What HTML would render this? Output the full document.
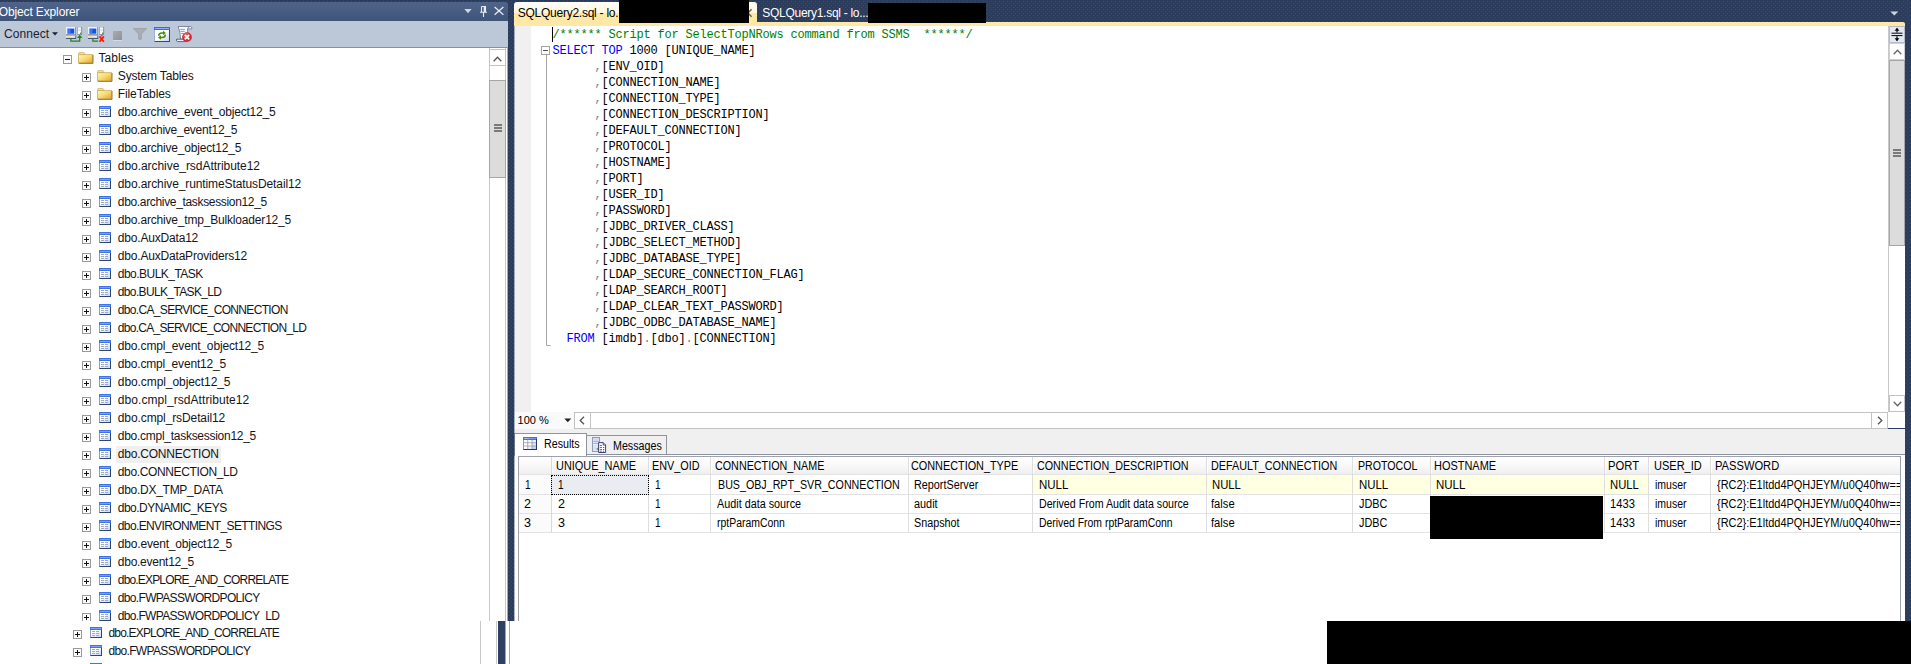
<!DOCTYPE html>
<html><head><meta charset="utf-8"><title>SSMS</title>
<style>
html,body{margin:0;padding:0}
body{width:1911px;height:664px;overflow:hidden;position:relative;background-color:#2b3c5c;
background-image:radial-gradient(circle at 3.5px 1.5px,#374c70 0.6px,transparent 1px),radial-gradient(circle at 1.5px 3.5px,#374c70 0.6px,transparent 1px);background-size:4px 4px;}
.a{position:absolute}
.t{position:absolute;white-space:pre;line-height:16px;transform-origin:0 50%;display:block}
svg{position:absolute;overflow:visible}
</style></head><body>
<svg width="0" height="0" style="left:0;top:0"><defs>
<linearGradient id="fg" x1="0" y1="0" x2="1" y2="1"><stop offset="0" stop-color="#fff7c6"/><stop offset=".5" stop-color="#f8d972"/><stop offset="1" stop-color="#dfa22e"/></linearGradient>
<linearGradient id="tg" x1="0" y1="0" x2="1" y2="1"><stop offset="0.3" stop-color="#ffffff"/><stop offset="1" stop-color="#c4d8f6"/></linearGradient>
</defs></svg>

<!-- Object Explorer -->
<div class="a" style="left:0px;top:2px;width:508px;height:19px;background:linear-gradient(#4f6488,#3f5479);border-top-right-radius:3px"></div>
<span id="t1" class="t " style="left:-1.30px;top:4.04px;font-size:12px;color:#fff;font-family:'Liberation Sans',sans-serif;letter-spacing:-0.129px;">Object Explorer</span>
<svg style="left:464px;top:5px" width="42" height="13" viewBox="0 0 42 13"><path d="M0.3 4 H7.7 L4 8.2 Z" fill="#cfd6e2"/><path d="M17.5 1.5 H21.5 V7 M17.5 1.5 V7 M16 7.2 H23 M19.5 7.2 V12" stroke="#e6eaf1" stroke-width="1.1" fill="none"/><path d="M20.5 1.5V7" stroke="#e6eaf1" stroke-width="1.6"/><path d="M30.6 2 L39.4 9.8 M39.4 2 L30.6 9.8" stroke="#e6eaf1" stroke-width="1.3" fill="none"/></svg>
<div class="a" style="left:0px;top:21px;width:508px;height:26px;background:#bcc7d8;"></div>
<div class="a" style="left:0px;top:47px;width:508px;height:1px;background:#8591a5;"></div>
<span id="t2" class="t " style="left:4.00px;top:26.04px;font-size:12px;color:#1b2230;font-family:'Liberation Sans',sans-serif;letter-spacing:0.083px;">Connect</span>
<svg style="left:52px;top:31.6px" width="7" height="5"><path d="M0 0.3H6L3 3.5Z" fill="#1b2230"/></svg>
<svg style="left:66px;top:26px" width="18" height="17" viewBox="0 0 18 17"><rect x="0" y="1" width="10" height="8" fill="#7a879f"/><rect x="0" y="1" width="9.2" height="7.2" fill="#eef2fa"/><rect x="1.5" y="2.6" width="6.8" height="5.1" fill="#1250ee"/><rect x="1.5" y="2.6" width="3" height="5.1" fill="#4a86ff" opacity=".75"/><rect x="0" y="9.6" width="10.2" height="3.3" fill="#3b4a69"/><rect x="0" y="9.6" width="9.4" height="2.3" fill="#e3e8f2"/><rect x="1" y="10.2" width="2.6" height="1.2" fill="#f1e36a"/><rect x="11.3" y="0.9" width="4.8" height="8" rx="1.2" fill="#6b768c"/><rect x="11.7" y="1.3" width="3.6" height="7" rx="0.8" fill="#fafbfd"/><rect x="12.2" y="3.6" width="2.6" height="0.8" fill="#b3bccd"/><rect x="14" y="6.6" width="1.3" height="1.3" fill="#35a11f"/></svg>
<svg style="left:66px;top:26px" width="18" height="17" viewBox="0 0 18 17"><path d="M4.9 12.9 V15.1 H13.7 V11" stroke="#1f8a00" stroke-width="1.25" fill="none"/><path d="M11 12 L13.7 8.8 L16.4 12 Z" fill="#1f8a00"/></svg>
<svg style="left:88px;top:26px" width="18" height="17" viewBox="0 0 18 17"><rect x="0" y="1" width="10" height="8" fill="#7a879f"/><rect x="0" y="1" width="9.2" height="7.2" fill="#eef2fa"/><rect x="1.5" y="2.6" width="6.8" height="5.1" fill="#1250ee"/><rect x="1.5" y="2.6" width="3" height="5.1" fill="#4a86ff" opacity=".75"/><rect x="0" y="9.6" width="10.2" height="3.3" fill="#3b4a69"/><rect x="0" y="9.6" width="9.4" height="2.3" fill="#e3e8f2"/><rect x="1" y="10.2" width="2.6" height="1.2" fill="#f1e36a"/><rect x="11.3" y="0.9" width="4.8" height="8" rx="1.2" fill="#6b768c"/><rect x="11.7" y="1.3" width="3.6" height="7" rx="0.8" fill="#fafbfd"/><rect x="12.2" y="3.6" width="2.6" height="0.8" fill="#b3bccd"/><rect x="14" y="6.6" width="1.3" height="1.3" fill="#35a11f"/></svg>
<svg style="left:88px;top:26px" width="18" height="17" viewBox="0 0 18 17"><path d="M4.9 12.9 V15.1 H10" stroke="#1f8a00" stroke-width="1.25" fill="none"/><path d="M13.7 8.9V10.2" stroke="#1f8a00" stroke-width="1.2"/><path d="M11.5 10.4 L15.9 15.7 M15.9 10.4 L11.5 15.7" stroke="#ff1a00" stroke-width="1.8" fill="none"/></svg>
<div class="a" style="left:113px;top:31px;width:9px;height:9px;background:linear-gradient(135deg,#a9adb3,#8e9297);box-shadow:0 1px 0 #d5dbe6"></div>
<svg style="left:133px;top:28px" width="14" height="12" viewBox="0 0 14 12"><path d="M0.3 0.5 H13.7 L8.3 6 V11.3 H5.7 V6 Z" fill="#a9aeb6" stroke="#8f959e" stroke-width="0.6"/></svg>
<svg style="left:154px;top:27px" width="16" height="15" viewBox="0 0 16 15"><defs><linearGradient id="rw" x1="0" y1="0" x2="1" y2="1"><stop offset=".45" stop-color="#fff"/><stop offset="1" stop-color="#c6d6f4"/></linearGradient></defs><rect x="0" y="0" width="16" height="15" fill="#9fb3da"/><rect x="1" y="3" width="14" height="11" fill="url(#rw)"/><rect x="0" y="0" width="16" height="3" fill="#386ce0"/><rect x="1" y="1" width="14" height="1" fill="#8db0f5"/><rect x="15" y="3" width="1" height="12" fill="#2f4a7a"/><rect x="0.6" y="14" width="15.4" height="1" fill="#2f4a7a"/><path d="M4.7 8.8 Q4.7 5.9 8 5.9 H9.4" stroke="#4a8c00" stroke-width="1.5" fill="none"/><path d="M9 3.7 L11.9 5.9 L9 8.1Z" fill="#4a8c00"/><path d="M11.3 7.4 Q11.3 10.5 8 10.5 H6.6" stroke="#4a8c00" stroke-width="1.5" fill="none"/><path d="M7 8.3 L4.1 10.5 L7 12.7Z" fill="#4a8c00"/></svg>
<svg style="left:176px;top:26px" width="17" height="16" viewBox="0 0 17 16"><path d="M2.2 0.5 H14.6 Q16.2 0.7 15.8 2.9 H11.6 V13.2 H4.6 Q4.4 6 2.2 0.5 Z" fill="#f8fafd" stroke="#66748f" stroke-width="0.8"/><path d="M11.6 2.9 Q11.8 1 13.6 1" stroke="#66748f" stroke-width="0.7" fill="none"/><path d="M0.5 13.2 H11.6 Q11.6 15.6 9.6 15.6 H1.6 Q0.1 15.3 0.5 13.2Z" fill="#e9eef8" stroke="#3d4a66" stroke-width="0.8"/><path d="M4.2 3.4H8.8M4.4 5.4H8.8M5.2 7.5H8.8" stroke="#7096e4" stroke-width="0.9"/><circle cx="11" cy="11.1" r="4.9" fill="#d42a30"/><circle cx="10.2" cy="9.8" r="3" fill="#ee7a7c" opacity=".5"/><path d="M8.8 8.9 L13.2 13.3 M13.2 8.9 L8.8 13.3" stroke="#fff" stroke-width="1.7"/></svg>
<div class="a" style="left:0px;top:48px;width:508px;height:573px;background:#fff;"></div>
<div class="a" style="left:0;top:48px;width:508px;height:573px;overflow:hidden"><div class="a" style="left:0;top:-48px">
<svg style="left:63px;top:55px" width="9" height="9" viewBox="0 0 9 9"><rect x="0.5" y="0.5" width="8" height="8" fill="#fbfbfb" stroke="#9a9a9a" stroke-width="1"/><path d="M2 4.5 H7" stroke="#111" stroke-width="1"/></svg><svg style="left:78px;top:52px" width="16" height="13" viewBox="0 0 16 13"><path d="M0.6 1.3 Q0.6 0.5 1.4 0.5 H5.6 Q6.3 0.5 6.6 1.2 L7 2.6 H0.6Z" fill="#f7e08d" stroke="#c9a548" stroke-width="0.6"/><path d="M0.5 2.6 H14.6 V11 H0.5 Z" fill="url(#fg)" stroke="#c9a242" stroke-width="0.7"/><path d="M15 3 V11.4 H0.8" stroke="#8f6f28" stroke-width="0.9" fill="none"/></svg><span id="t3" class="t " style="left:98.50px;top:50.14px;font-size:12px;color:#15151a;font-family:'Liberation Sans',sans-serif;letter-spacing:0.083px;">Tables</span>
<svg style="left:82px;top:73px" width="9" height="9" viewBox="0 0 9 9"><rect x="0.5" y="0.5" width="8" height="8" fill="#fbfbfb" stroke="#9a9a9a" stroke-width="1"/><path d="M2 4.5 H7" stroke="#111" stroke-width="1"/><path d="M4.5 2 V7" stroke="#111" stroke-width="1"/></svg><svg style="left:97px;top:70px" width="16" height="13" viewBox="0 0 16 13"><path d="M0.6 1.3 Q0.6 0.5 1.4 0.5 H5.6 Q6.3 0.5 6.6 1.2 L7 2.6 H0.6Z" fill="#f7e08d" stroke="#c9a548" stroke-width="0.6"/><path d="M0.5 2.6 H14.6 V11 H0.5 Z" fill="url(#fg)" stroke="#c9a242" stroke-width="0.7"/><path d="M15 3 V11.4 H0.8" stroke="#8f6f28" stroke-width="0.9" fill="none"/></svg><span id="t4" class="t " style="left:117.80px;top:68.14px;font-size:12px;color:#15151a;font-family:'Liberation Sans',sans-serif;letter-spacing:-0.151px;">System Tables</span>
<svg style="left:82px;top:91px" width="9" height="9" viewBox="0 0 9 9"><rect x="0.5" y="0.5" width="8" height="8" fill="#fbfbfb" stroke="#9a9a9a" stroke-width="1"/><path d="M2 4.5 H7" stroke="#111" stroke-width="1"/><path d="M4.5 2 V7" stroke="#111" stroke-width="1"/></svg><svg style="left:97px;top:88px" width="16" height="13" viewBox="0 0 16 13"><path d="M0.6 1.3 Q0.6 0.5 1.4 0.5 H5.6 Q6.3 0.5 6.6 1.2 L7 2.6 H0.6Z" fill="#f7e08d" stroke="#c9a548" stroke-width="0.6"/><path d="M0.5 2.6 H14.6 V11 H0.5 Z" fill="url(#fg)" stroke="#c9a242" stroke-width="0.7"/><path d="M15 3 V11.4 H0.8" stroke="#8f6f28" stroke-width="0.9" fill="none"/></svg><span id="t5" class="t " style="left:117.80px;top:86.14px;font-size:12px;color:#15151a;font-family:'Liberation Sans',sans-serif;letter-spacing:-0.115px;">FileTables</span>
<svg style="left:82px;top:109px" width="9" height="9" viewBox="0 0 9 9"><rect x="0.5" y="0.5" width="8" height="8" fill="#fbfbfb" stroke="#9a9a9a" stroke-width="1"/><path d="M2 4.5 H7" stroke="#111" stroke-width="1"/><path d="M4.5 2 V7" stroke="#111" stroke-width="1"/></svg><svg style="left:99px;top:106px" width="12" height="11" viewBox="0 0 12 11"><rect x="0" y="0" width="12" height="11" fill="#8c9dc2"/><rect x="1" y="3" width="10" height="7" fill="url(#tg)"/><rect x="11" y="3" width="1" height="8" fill="#2f4673"/><rect x="0.6" y="10" width="11.4" height="1" fill="#2f4673"/><rect x="0" y="0" width="12" height="3" fill="#3f74e4"/><rect x="1" y="1" width="10" height="1" fill="#7aa2f0"/><path d="M2 4.5H5M6 4.5H9M2 6.5H5M6 6.5H9M2 8.5H5M6 8.5H9" stroke="#9dabc9" stroke-width="1"/></svg><span id="t6" class="t " style="left:117.80px;top:104.14px;font-size:12px;color:#15151a;font-family:'Liberation Sans',sans-serif;letter-spacing:-0.206px;">dbo.archive_event_object12_5</span>
<svg style="left:82px;top:127px" width="9" height="9" viewBox="0 0 9 9"><rect x="0.5" y="0.5" width="8" height="8" fill="#fbfbfb" stroke="#9a9a9a" stroke-width="1"/><path d="M2 4.5 H7" stroke="#111" stroke-width="1"/><path d="M4.5 2 V7" stroke="#111" stroke-width="1"/></svg><svg style="left:99px;top:124px" width="12" height="11" viewBox="0 0 12 11"><rect x="0" y="0" width="12" height="11" fill="#8c9dc2"/><rect x="1" y="3" width="10" height="7" fill="url(#tg)"/><rect x="11" y="3" width="1" height="8" fill="#2f4673"/><rect x="0.6" y="10" width="11.4" height="1" fill="#2f4673"/><rect x="0" y="0" width="12" height="3" fill="#3f74e4"/><rect x="1" y="1" width="10" height="1" fill="#7aa2f0"/><path d="M2 4.5H5M6 4.5H9M2 6.5H5M6 6.5H9M2 8.5H5M6 8.5H9" stroke="#9dabc9" stroke-width="1"/></svg><span id="t7" class="t " style="left:117.80px;top:122.14px;font-size:12px;color:#15151a;font-family:'Liberation Sans',sans-serif;letter-spacing:-0.258px;">dbo.archive_event12_5</span>
<svg style="left:82px;top:145px" width="9" height="9" viewBox="0 0 9 9"><rect x="0.5" y="0.5" width="8" height="8" fill="#fbfbfb" stroke="#9a9a9a" stroke-width="1"/><path d="M2 4.5 H7" stroke="#111" stroke-width="1"/><path d="M4.5 2 V7" stroke="#111" stroke-width="1"/></svg><svg style="left:99px;top:142px" width="12" height="11" viewBox="0 0 12 11"><rect x="0" y="0" width="12" height="11" fill="#8c9dc2"/><rect x="1" y="3" width="10" height="7" fill="url(#tg)"/><rect x="11" y="3" width="1" height="8" fill="#2f4673"/><rect x="0.6" y="10" width="11.4" height="1" fill="#2f4673"/><rect x="0" y="0" width="12" height="3" fill="#3f74e4"/><rect x="1" y="1" width="10" height="1" fill="#7aa2f0"/><path d="M2 4.5H5M6 4.5H9M2 6.5H5M6 6.5H9M2 8.5H5M6 8.5H9" stroke="#9dabc9" stroke-width="1"/></svg><span id="t8" class="t " style="left:117.80px;top:140.14px;font-size:12px;color:#15151a;font-family:'Liberation Sans',sans-serif;letter-spacing:-0.187px;">dbo.archive_object12_5</span>
<svg style="left:82px;top:163px" width="9" height="9" viewBox="0 0 9 9"><rect x="0.5" y="0.5" width="8" height="8" fill="#fbfbfb" stroke="#9a9a9a" stroke-width="1"/><path d="M2 4.5 H7" stroke="#111" stroke-width="1"/><path d="M4.5 2 V7" stroke="#111" stroke-width="1"/></svg><svg style="left:99px;top:160px" width="12" height="11" viewBox="0 0 12 11"><rect x="0" y="0" width="12" height="11" fill="#8c9dc2"/><rect x="1" y="3" width="10" height="7" fill="url(#tg)"/><rect x="11" y="3" width="1" height="8" fill="#2f4673"/><rect x="0.6" y="10" width="11.4" height="1" fill="#2f4673"/><rect x="0" y="0" width="12" height="3" fill="#3f74e4"/><rect x="1" y="1" width="10" height="1" fill="#7aa2f0"/><path d="M2 4.5H5M6 4.5H9M2 6.5H5M6 6.5H9M2 8.5H5M6 8.5H9" stroke="#9dabc9" stroke-width="1"/></svg><span id="t9" class="t " style="left:117.80px;top:158.14px;font-size:12px;color:#15151a;font-family:'Liberation Sans',sans-serif;letter-spacing:-0.049px;">dbo.archive_rsdAttribute12</span>
<svg style="left:82px;top:181px" width="9" height="9" viewBox="0 0 9 9"><rect x="0.5" y="0.5" width="8" height="8" fill="#fbfbfb" stroke="#9a9a9a" stroke-width="1"/><path d="M2 4.5 H7" stroke="#111" stroke-width="1"/><path d="M4.5 2 V7" stroke="#111" stroke-width="1"/></svg><svg style="left:99px;top:178px" width="12" height="11" viewBox="0 0 12 11"><rect x="0" y="0" width="12" height="11" fill="#8c9dc2"/><rect x="1" y="3" width="10" height="7" fill="url(#tg)"/><rect x="11" y="3" width="1" height="8" fill="#2f4673"/><rect x="0.6" y="10" width="11.4" height="1" fill="#2f4673"/><rect x="0" y="0" width="12" height="3" fill="#3f74e4"/><rect x="1" y="1" width="10" height="1" fill="#7aa2f0"/><path d="M2 4.5H5M6 4.5H9M2 6.5H5M6 6.5H9M2 8.5H5M6 8.5H9" stroke="#9dabc9" stroke-width="1"/></svg><span id="t10" class="t " style="left:117.80px;top:176.14px;font-size:12px;color:#15151a;font-family:'Liberation Sans',sans-serif;letter-spacing:-0.103px;">dbo.archive_runtimeStatusDetail12</span>
<svg style="left:82px;top:199px" width="9" height="9" viewBox="0 0 9 9"><rect x="0.5" y="0.5" width="8" height="8" fill="#fbfbfb" stroke="#9a9a9a" stroke-width="1"/><path d="M2 4.5 H7" stroke="#111" stroke-width="1"/><path d="M4.5 2 V7" stroke="#111" stroke-width="1"/></svg><svg style="left:99px;top:196px" width="12" height="11" viewBox="0 0 12 11"><rect x="0" y="0" width="12" height="11" fill="#8c9dc2"/><rect x="1" y="3" width="10" height="7" fill="url(#tg)"/><rect x="11" y="3" width="1" height="8" fill="#2f4673"/><rect x="0.6" y="10" width="11.4" height="1" fill="#2f4673"/><rect x="0" y="0" width="12" height="3" fill="#3f74e4"/><rect x="1" y="1" width="10" height="1" fill="#7aa2f0"/><path d="M2 4.5H5M6 4.5H9M2 6.5H5M6 6.5H9M2 8.5H5M6 8.5H9" stroke="#9dabc9" stroke-width="1"/></svg><span id="t11" class="t " style="left:117.80px;top:194.14px;font-size:12px;color:#15151a;font-family:'Liberation Sans',sans-serif;letter-spacing:-0.335px;">dbo.archive_tasksession12_5</span>
<svg style="left:82px;top:217px" width="9" height="9" viewBox="0 0 9 9"><rect x="0.5" y="0.5" width="8" height="8" fill="#fbfbfb" stroke="#9a9a9a" stroke-width="1"/><path d="M2 4.5 H7" stroke="#111" stroke-width="1"/><path d="M4.5 2 V7" stroke="#111" stroke-width="1"/></svg><svg style="left:99px;top:214px" width="12" height="11" viewBox="0 0 12 11"><rect x="0" y="0" width="12" height="11" fill="#8c9dc2"/><rect x="1" y="3" width="10" height="7" fill="url(#tg)"/><rect x="11" y="3" width="1" height="8" fill="#2f4673"/><rect x="0.6" y="10" width="11.4" height="1" fill="#2f4673"/><rect x="0" y="0" width="12" height="3" fill="#3f74e4"/><rect x="1" y="1" width="10" height="1" fill="#7aa2f0"/><path d="M2 4.5H5M6 4.5H9M2 6.5H5M6 6.5H9M2 8.5H5M6 8.5H9" stroke="#9dabc9" stroke-width="1"/></svg><span id="t12" class="t " style="left:117.80px;top:212.14px;font-size:12px;color:#15151a;font-family:'Liberation Sans',sans-serif;letter-spacing:-0.183px;">dbo.archive_tmp_Bulkloader12_5</span>
<svg style="left:82px;top:235px" width="9" height="9" viewBox="0 0 9 9"><rect x="0.5" y="0.5" width="8" height="8" fill="#fbfbfb" stroke="#9a9a9a" stroke-width="1"/><path d="M2 4.5 H7" stroke="#111" stroke-width="1"/><path d="M4.5 2 V7" stroke="#111" stroke-width="1"/></svg><svg style="left:99px;top:232px" width="12" height="11" viewBox="0 0 12 11"><rect x="0" y="0" width="12" height="11" fill="#8c9dc2"/><rect x="1" y="3" width="10" height="7" fill="url(#tg)"/><rect x="11" y="3" width="1" height="8" fill="#2f4673"/><rect x="0.6" y="10" width="11.4" height="1" fill="#2f4673"/><rect x="0" y="0" width="12" height="3" fill="#3f74e4"/><rect x="1" y="1" width="10" height="1" fill="#7aa2f0"/><path d="M2 4.5H5M6 4.5H9M2 6.5H5M6 6.5H9M2 8.5H5M6 8.5H9" stroke="#9dabc9" stroke-width="1"/></svg><span id="t13" class="t " style="left:117.80px;top:230.14px;font-size:12px;color:#15151a;font-family:'Liberation Sans',sans-serif;letter-spacing:-0.186px;">dbo.AuxData12</span>
<svg style="left:82px;top:253px" width="9" height="9" viewBox="0 0 9 9"><rect x="0.5" y="0.5" width="8" height="8" fill="#fbfbfb" stroke="#9a9a9a" stroke-width="1"/><path d="M2 4.5 H7" stroke="#111" stroke-width="1"/><path d="M4.5 2 V7" stroke="#111" stroke-width="1"/></svg><svg style="left:99px;top:250px" width="12" height="11" viewBox="0 0 12 11"><rect x="0" y="0" width="12" height="11" fill="#8c9dc2"/><rect x="1" y="3" width="10" height="7" fill="url(#tg)"/><rect x="11" y="3" width="1" height="8" fill="#2f4673"/><rect x="0.6" y="10" width="11.4" height="1" fill="#2f4673"/><rect x="0" y="0" width="12" height="3" fill="#3f74e4"/><rect x="1" y="1" width="10" height="1" fill="#7aa2f0"/><path d="M2 4.5H5M6 4.5H9M2 6.5H5M6 6.5H9M2 8.5H5M6 8.5H9" stroke="#9dabc9" stroke-width="1"/></svg><span id="t14" class="t " style="left:117.80px;top:248.14px;font-size:12px;color:#15151a;font-family:'Liberation Sans',sans-serif;letter-spacing:-0.187px;">dbo.AuxDataProviders12</span>
<svg style="left:82px;top:271px" width="9" height="9" viewBox="0 0 9 9"><rect x="0.5" y="0.5" width="8" height="8" fill="#fbfbfb" stroke="#9a9a9a" stroke-width="1"/><path d="M2 4.5 H7" stroke="#111" stroke-width="1"/><path d="M4.5 2 V7" stroke="#111" stroke-width="1"/></svg><svg style="left:99px;top:268px" width="12" height="11" viewBox="0 0 12 11"><rect x="0" y="0" width="12" height="11" fill="#8c9dc2"/><rect x="1" y="3" width="10" height="7" fill="url(#tg)"/><rect x="11" y="3" width="1" height="8" fill="#2f4673"/><rect x="0.6" y="10" width="11.4" height="1" fill="#2f4673"/><rect x="0" y="0" width="12" height="3" fill="#3f74e4"/><rect x="1" y="1" width="10" height="1" fill="#7aa2f0"/><path d="M2 4.5H5M6 4.5H9M2 6.5H5M6 6.5H9M2 8.5H5M6 8.5H9" stroke="#9dabc9" stroke-width="1"/></svg><span id="t15" class="t " style="left:117.80px;top:266.14px;font-size:12px;color:#15151a;font-family:'Liberation Sans',sans-serif;letter-spacing:-0.527px;">dbo.BULK_TASK</span>
<svg style="left:82px;top:289px" width="9" height="9" viewBox="0 0 9 9"><rect x="0.5" y="0.5" width="8" height="8" fill="#fbfbfb" stroke="#9a9a9a" stroke-width="1"/><path d="M2 4.5 H7" stroke="#111" stroke-width="1"/><path d="M4.5 2 V7" stroke="#111" stroke-width="1"/></svg><svg style="left:99px;top:286px" width="12" height="11" viewBox="0 0 12 11"><rect x="0" y="0" width="12" height="11" fill="#8c9dc2"/><rect x="1" y="3" width="10" height="7" fill="url(#tg)"/><rect x="11" y="3" width="1" height="8" fill="#2f4673"/><rect x="0.6" y="10" width="11.4" height="1" fill="#2f4673"/><rect x="0" y="0" width="12" height="3" fill="#3f74e4"/><rect x="1" y="1" width="10" height="1" fill="#7aa2f0"/><path d="M2 4.5H5M6 4.5H9M2 6.5H5M6 6.5H9M2 8.5H5M6 8.5H9" stroke="#9dabc9" stroke-width="1"/></svg><span id="t16" class="t " style="left:117.80px;top:284.14px;font-size:12px;color:#15151a;font-family:'Liberation Sans',sans-serif;letter-spacing:-0.643px;">dbo.BULK_TASK_LD</span>
<svg style="left:82px;top:307px" width="9" height="9" viewBox="0 0 9 9"><rect x="0.5" y="0.5" width="8" height="8" fill="#fbfbfb" stroke="#9a9a9a" stroke-width="1"/><path d="M2 4.5 H7" stroke="#111" stroke-width="1"/><path d="M4.5 2 V7" stroke="#111" stroke-width="1"/></svg><svg style="left:99px;top:304px" width="12" height="11" viewBox="0 0 12 11"><rect x="0" y="0" width="12" height="11" fill="#8c9dc2"/><rect x="1" y="3" width="10" height="7" fill="url(#tg)"/><rect x="11" y="3" width="1" height="8" fill="#2f4673"/><rect x="0.6" y="10" width="11.4" height="1" fill="#2f4673"/><rect x="0" y="0" width="12" height="3" fill="#3f74e4"/><rect x="1" y="1" width="10" height="1" fill="#7aa2f0"/><path d="M2 4.5H5M6 4.5H9M2 6.5H5M6 6.5H9M2 8.5H5M6 8.5H9" stroke="#9dabc9" stroke-width="1"/></svg><span id="t17" class="t " style="left:117.80px;top:302.14px;font-size:12px;color:#15151a;font-family:'Liberation Sans',sans-serif;letter-spacing:-0.667px;">dbo.CA_SERVICE_CONNECTION</span>
<svg style="left:82px;top:325px" width="9" height="9" viewBox="0 0 9 9"><rect x="0.5" y="0.5" width="8" height="8" fill="#fbfbfb" stroke="#9a9a9a" stroke-width="1"/><path d="M2 4.5 H7" stroke="#111" stroke-width="1"/><path d="M4.5 2 V7" stroke="#111" stroke-width="1"/></svg><svg style="left:99px;top:322px" width="12" height="11" viewBox="0 0 12 11"><rect x="0" y="0" width="12" height="11" fill="#8c9dc2"/><rect x="1" y="3" width="10" height="7" fill="url(#tg)"/><rect x="11" y="3" width="1" height="8" fill="#2f4673"/><rect x="0.6" y="10" width="11.4" height="1" fill="#2f4673"/><rect x="0" y="0" width="12" height="3" fill="#3f74e4"/><rect x="1" y="1" width="10" height="1" fill="#7aa2f0"/><path d="M2 4.5H5M6 4.5H9M2 6.5H5M6 6.5H9M2 8.5H5M6 8.5H9" stroke="#9dabc9" stroke-width="1"/></svg><span id="t18" class="t " style="left:117.80px;top:320.14px;font-size:12px;color:#15151a;font-family:'Liberation Sans',sans-serif;letter-spacing:-0.716px;">dbo.CA_SERVICE_CONNECTION_LD</span>
<svg style="left:82px;top:343px" width="9" height="9" viewBox="0 0 9 9"><rect x="0.5" y="0.5" width="8" height="8" fill="#fbfbfb" stroke="#9a9a9a" stroke-width="1"/><path d="M2 4.5 H7" stroke="#111" stroke-width="1"/><path d="M4.5 2 V7" stroke="#111" stroke-width="1"/></svg><svg style="left:99px;top:340px" width="12" height="11" viewBox="0 0 12 11"><rect x="0" y="0" width="12" height="11" fill="#8c9dc2"/><rect x="1" y="3" width="10" height="7" fill="url(#tg)"/><rect x="11" y="3" width="1" height="8" fill="#2f4673"/><rect x="0.6" y="10" width="11.4" height="1" fill="#2f4673"/><rect x="0" y="0" width="12" height="3" fill="#3f74e4"/><rect x="1" y="1" width="10" height="1" fill="#7aa2f0"/><path d="M2 4.5H5M6 4.5H9M2 6.5H5M6 6.5H9M2 8.5H5M6 8.5H9" stroke="#9dabc9" stroke-width="1"/></svg><span id="t19" class="t " style="left:117.80px;top:338.14px;font-size:12px;color:#15151a;font-family:'Liberation Sans',sans-serif;letter-spacing:-0.155px;">dbo.cmpl_event_object12_5</span>
<svg style="left:82px;top:361px" width="9" height="9" viewBox="0 0 9 9"><rect x="0.5" y="0.5" width="8" height="8" fill="#fbfbfb" stroke="#9a9a9a" stroke-width="1"/><path d="M2 4.5 H7" stroke="#111" stroke-width="1"/><path d="M4.5 2 V7" stroke="#111" stroke-width="1"/></svg><svg style="left:99px;top:358px" width="12" height="11" viewBox="0 0 12 11"><rect x="0" y="0" width="12" height="11" fill="#8c9dc2"/><rect x="1" y="3" width="10" height="7" fill="url(#tg)"/><rect x="11" y="3" width="1" height="8" fill="#2f4673"/><rect x="0.6" y="10" width="11.4" height="1" fill="#2f4673"/><rect x="0" y="0" width="12" height="3" fill="#3f74e4"/><rect x="1" y="1" width="10" height="1" fill="#7aa2f0"/><path d="M2 4.5H5M6 4.5H9M2 6.5H5M6 6.5H9M2 8.5H5M6 8.5H9" stroke="#9dabc9" stroke-width="1"/></svg><span id="t20" class="t " style="left:117.80px;top:356.14px;font-size:12px;color:#15151a;font-family:'Liberation Sans',sans-serif;letter-spacing:-0.172px;">dbo.cmpl_event12_5</span>
<svg style="left:82px;top:379px" width="9" height="9" viewBox="0 0 9 9"><rect x="0.5" y="0.5" width="8" height="8" fill="#fbfbfb" stroke="#9a9a9a" stroke-width="1"/><path d="M2 4.5 H7" stroke="#111" stroke-width="1"/><path d="M4.5 2 V7" stroke="#111" stroke-width="1"/></svg><svg style="left:99px;top:376px" width="12" height="11" viewBox="0 0 12 11"><rect x="0" y="0" width="12" height="11" fill="#8c9dc2"/><rect x="1" y="3" width="10" height="7" fill="url(#tg)"/><rect x="11" y="3" width="1" height="8" fill="#2f4673"/><rect x="0.6" y="10" width="11.4" height="1" fill="#2f4673"/><rect x="0" y="0" width="12" height="3" fill="#3f74e4"/><rect x="1" y="1" width="10" height="1" fill="#7aa2f0"/><path d="M2 4.5H5M6 4.5H9M2 6.5H5M6 6.5H9M2 8.5H5M6 8.5H9" stroke="#9dabc9" stroke-width="1"/></svg><span id="t21" class="t " style="left:117.80px;top:374.14px;font-size:12px;color:#15151a;font-family:'Liberation Sans',sans-serif;letter-spacing:-0.077px;">dbo.cmpl_object12_5</span>
<svg style="left:82px;top:397px" width="9" height="9" viewBox="0 0 9 9"><rect x="0.5" y="0.5" width="8" height="8" fill="#fbfbfb" stroke="#9a9a9a" stroke-width="1"/><path d="M2 4.5 H7" stroke="#111" stroke-width="1"/><path d="M4.5 2 V7" stroke="#111" stroke-width="1"/></svg><svg style="left:99px;top:394px" width="12" height="11" viewBox="0 0 12 11"><rect x="0" y="0" width="12" height="11" fill="#8c9dc2"/><rect x="1" y="3" width="10" height="7" fill="url(#tg)"/><rect x="11" y="3" width="1" height="8" fill="#2f4673"/><rect x="0.6" y="10" width="11.4" height="1" fill="#2f4673"/><rect x="0" y="0" width="12" height="3" fill="#3f74e4"/><rect x="1" y="1" width="10" height="1" fill="#7aa2f0"/><path d="M2 4.5H5M6 4.5H9M2 6.5H5M6 6.5H9M2 8.5H5M6 8.5H9" stroke="#9dabc9" stroke-width="1"/></svg><span id="t22" class="t " style="left:117.80px;top:392.14px;font-size:12px;color:#15151a;font-family:'Liberation Sans',sans-serif;letter-spacing:0.060px;">dbo.cmpl_rsdAttribute12</span>
<svg style="left:82px;top:415px" width="9" height="9" viewBox="0 0 9 9"><rect x="0.5" y="0.5" width="8" height="8" fill="#fbfbfb" stroke="#9a9a9a" stroke-width="1"/><path d="M2 4.5 H7" stroke="#111" stroke-width="1"/><path d="M4.5 2 V7" stroke="#111" stroke-width="1"/></svg><svg style="left:99px;top:412px" width="12" height="11" viewBox="0 0 12 11"><rect x="0" y="0" width="12" height="11" fill="#8c9dc2"/><rect x="1" y="3" width="10" height="7" fill="url(#tg)"/><rect x="11" y="3" width="1" height="8" fill="#2f4673"/><rect x="0.6" y="10" width="11.4" height="1" fill="#2f4673"/><rect x="0" y="0" width="12" height="3" fill="#3f74e4"/><rect x="1" y="1" width="10" height="1" fill="#7aa2f0"/><path d="M2 4.5H5M6 4.5H9M2 6.5H5M6 6.5H9M2 8.5H5M6 8.5H9" stroke="#9dabc9" stroke-width="1"/></svg><span id="t23" class="t " style="left:117.80px;top:410.14px;font-size:12px;color:#15151a;font-family:'Liberation Sans',sans-serif;letter-spacing:-0.105px;">dbo.cmpl_rsDetail12</span>
<svg style="left:82px;top:433px" width="9" height="9" viewBox="0 0 9 9"><rect x="0.5" y="0.5" width="8" height="8" fill="#fbfbfb" stroke="#9a9a9a" stroke-width="1"/><path d="M2 4.5 H7" stroke="#111" stroke-width="1"/><path d="M4.5 2 V7" stroke="#111" stroke-width="1"/></svg><svg style="left:99px;top:430px" width="12" height="11" viewBox="0 0 12 11"><rect x="0" y="0" width="12" height="11" fill="#8c9dc2"/><rect x="1" y="3" width="10" height="7" fill="url(#tg)"/><rect x="11" y="3" width="1" height="8" fill="#2f4673"/><rect x="0.6" y="10" width="11.4" height="1" fill="#2f4673"/><rect x="0" y="0" width="12" height="3" fill="#3f74e4"/><rect x="1" y="1" width="10" height="1" fill="#7aa2f0"/><path d="M2 4.5H5M6 4.5H9M2 6.5H5M6 6.5H9M2 8.5H5M6 8.5H9" stroke="#9dabc9" stroke-width="1"/></svg><span id="t24" class="t " style="left:117.80px;top:428.14px;font-size:12px;color:#15151a;font-family:'Liberation Sans',sans-serif;letter-spacing:-0.272px;">dbo.cmpl_tasksession12_5</span>
<svg style="left:82px;top:451px" width="9" height="9" viewBox="0 0 9 9"><rect x="0.5" y="0.5" width="8" height="8" fill="#fbfbfb" stroke="#9a9a9a" stroke-width="1"/><path d="M2 4.5 H7" stroke="#111" stroke-width="1"/><path d="M4.5 2 V7" stroke="#111" stroke-width="1"/></svg><svg style="left:99px;top:448px" width="12" height="11" viewBox="0 0 12 11"><rect x="0" y="0" width="12" height="11" fill="#8c9dc2"/><rect x="1" y="3" width="10" height="7" fill="url(#tg)"/><rect x="11" y="3" width="1" height="8" fill="#2f4673"/><rect x="0.6" y="10" width="11.4" height="1" fill="#2f4673"/><rect x="0" y="0" width="12" height="3" fill="#3f74e4"/><rect x="1" y="1" width="10" height="1" fill="#7aa2f0"/><path d="M2 4.5H5M6 4.5H9M2 6.5H5M6 6.5H9M2 8.5H5M6 8.5H9" stroke="#9dabc9" stroke-width="1"/></svg><div class="a" style="left:116px;top:445.5px;width:104.49999999999999px;height:17px;background:#f0f0f0;"></div><span id="t25" class="t " style="left:117.80px;top:446.14px;font-size:12px;color:#15151a;font-family:'Liberation Sans',sans-serif;letter-spacing:-0.218px;">dbo.CONNECTION</span>
<svg style="left:82px;top:469px" width="9" height="9" viewBox="0 0 9 9"><rect x="0.5" y="0.5" width="8" height="8" fill="#fbfbfb" stroke="#9a9a9a" stroke-width="1"/><path d="M2 4.5 H7" stroke="#111" stroke-width="1"/><path d="M4.5 2 V7" stroke="#111" stroke-width="1"/></svg><svg style="left:99px;top:466px" width="12" height="11" viewBox="0 0 12 11"><rect x="0" y="0" width="12" height="11" fill="#8c9dc2"/><rect x="1" y="3" width="10" height="7" fill="url(#tg)"/><rect x="11" y="3" width="1" height="8" fill="#2f4673"/><rect x="0.6" y="10" width="11.4" height="1" fill="#2f4673"/><rect x="0" y="0" width="12" height="3" fill="#3f74e4"/><rect x="1" y="1" width="10" height="1" fill="#7aa2f0"/><path d="M2 4.5H5M6 4.5H9M2 6.5H5M6 6.5H9M2 8.5H5M6 8.5H9" stroke="#9dabc9" stroke-width="1"/></svg><span id="t26" class="t " style="left:117.80px;top:464.14px;font-size:12px;color:#15151a;font-family:'Liberation Sans',sans-serif;letter-spacing:-0.365px;">dbo.CONNECTION_LD</span>
<svg style="left:82px;top:487px" width="9" height="9" viewBox="0 0 9 9"><rect x="0.5" y="0.5" width="8" height="8" fill="#fbfbfb" stroke="#9a9a9a" stroke-width="1"/><path d="M2 4.5 H7" stroke="#111" stroke-width="1"/><path d="M4.5 2 V7" stroke="#111" stroke-width="1"/></svg><svg style="left:99px;top:484px" width="12" height="11" viewBox="0 0 12 11"><rect x="0" y="0" width="12" height="11" fill="#8c9dc2"/><rect x="1" y="3" width="10" height="7" fill="url(#tg)"/><rect x="11" y="3" width="1" height="8" fill="#2f4673"/><rect x="0.6" y="10" width="11.4" height="1" fill="#2f4673"/><rect x="0" y="0" width="12" height="3" fill="#3f74e4"/><rect x="1" y="1" width="10" height="1" fill="#7aa2f0"/><path d="M2 4.5H5M6 4.5H9M2 6.5H5M6 6.5H9M2 8.5H5M6 8.5H9" stroke="#9dabc9" stroke-width="1"/></svg><span id="t27" class="t " style="left:117.80px;top:482.14px;font-size:12px;color:#15151a;font-family:'Liberation Sans',sans-serif;letter-spacing:-0.274px;">dbo.DX_TMP_DATA</span>
<svg style="left:82px;top:505px" width="9" height="9" viewBox="0 0 9 9"><rect x="0.5" y="0.5" width="8" height="8" fill="#fbfbfb" stroke="#9a9a9a" stroke-width="1"/><path d="M2 4.5 H7" stroke="#111" stroke-width="1"/><path d="M4.5 2 V7" stroke="#111" stroke-width="1"/></svg><svg style="left:99px;top:502px" width="12" height="11" viewBox="0 0 12 11"><rect x="0" y="0" width="12" height="11" fill="#8c9dc2"/><rect x="1" y="3" width="10" height="7" fill="url(#tg)"/><rect x="11" y="3" width="1" height="8" fill="#2f4673"/><rect x="0.6" y="10" width="11.4" height="1" fill="#2f4673"/><rect x="0" y="0" width="12" height="3" fill="#3f74e4"/><rect x="1" y="1" width="10" height="1" fill="#7aa2f0"/><path d="M2 4.5H5M6 4.5H9M2 6.5H5M6 6.5H9M2 8.5H5M6 8.5H9" stroke="#9dabc9" stroke-width="1"/></svg><span id="t28" class="t " style="left:117.80px;top:500.14px;font-size:12px;color:#15151a;font-family:'Liberation Sans',sans-serif;letter-spacing:-0.526px;">dbo.DYNAMIC_KEYS</span>
<svg style="left:82px;top:523px" width="9" height="9" viewBox="0 0 9 9"><rect x="0.5" y="0.5" width="8" height="8" fill="#fbfbfb" stroke="#9a9a9a" stroke-width="1"/><path d="M2 4.5 H7" stroke="#111" stroke-width="1"/><path d="M4.5 2 V7" stroke="#111" stroke-width="1"/></svg><svg style="left:99px;top:520px" width="12" height="11" viewBox="0 0 12 11"><rect x="0" y="0" width="12" height="11" fill="#8c9dc2"/><rect x="1" y="3" width="10" height="7" fill="url(#tg)"/><rect x="11" y="3" width="1" height="8" fill="#2f4673"/><rect x="0.6" y="10" width="11.4" height="1" fill="#2f4673"/><rect x="0" y="0" width="12" height="3" fill="#3f74e4"/><rect x="1" y="1" width="10" height="1" fill="#7aa2f0"/><path d="M2 4.5H5M6 4.5H9M2 6.5H5M6 6.5H9M2 8.5H5M6 8.5H9" stroke="#9dabc9" stroke-width="1"/></svg><span id="t29" class="t " style="left:117.80px;top:518.14px;font-size:12px;color:#15151a;font-family:'Liberation Sans',sans-serif;letter-spacing:-0.623px;">dbo.ENVIRONMENT_SETTINGS</span>
<svg style="left:82px;top:541px" width="9" height="9" viewBox="0 0 9 9"><rect x="0.5" y="0.5" width="8" height="8" fill="#fbfbfb" stroke="#9a9a9a" stroke-width="1"/><path d="M2 4.5 H7" stroke="#111" stroke-width="1"/><path d="M4.5 2 V7" stroke="#111" stroke-width="1"/></svg><svg style="left:99px;top:538px" width="12" height="11" viewBox="0 0 12 11"><rect x="0" y="0" width="12" height="11" fill="#8c9dc2"/><rect x="1" y="3" width="10" height="7" fill="url(#tg)"/><rect x="11" y="3" width="1" height="8" fill="#2f4673"/><rect x="0.6" y="10" width="11.4" height="1" fill="#2f4673"/><rect x="0" y="0" width="12" height="3" fill="#3f74e4"/><rect x="1" y="1" width="10" height="1" fill="#7aa2f0"/><path d="M2 4.5H5M6 4.5H9M2 6.5H5M6 6.5H9M2 8.5H5M6 8.5H9" stroke="#9dabc9" stroke-width="1"/></svg><span id="t30" class="t " style="left:117.80px;top:536.14px;font-size:12px;color:#15151a;font-family:'Liberation Sans',sans-serif;letter-spacing:-0.190px;">dbo.event_object12_5</span>
<svg style="left:82px;top:559px" width="9" height="9" viewBox="0 0 9 9"><rect x="0.5" y="0.5" width="8" height="8" fill="#fbfbfb" stroke="#9a9a9a" stroke-width="1"/><path d="M2 4.5 H7" stroke="#111" stroke-width="1"/><path d="M4.5 2 V7" stroke="#111" stroke-width="1"/></svg><svg style="left:99px;top:556px" width="12" height="11" viewBox="0 0 12 11"><rect x="0" y="0" width="12" height="11" fill="#8c9dc2"/><rect x="1" y="3" width="10" height="7" fill="url(#tg)"/><rect x="11" y="3" width="1" height="8" fill="#2f4673"/><rect x="0.6" y="10" width="11.4" height="1" fill="#2f4673"/><rect x="0" y="0" width="12" height="3" fill="#3f74e4"/><rect x="1" y="1" width="10" height="1" fill="#7aa2f0"/><path d="M2 4.5H5M6 4.5H9M2 6.5H5M6 6.5H9M2 8.5H5M6 8.5H9" stroke="#9dabc9" stroke-width="1"/></svg><span id="t31" class="t " style="left:117.80px;top:554.14px;font-size:12px;color:#15151a;font-family:'Liberation Sans',sans-serif;letter-spacing:-0.259px;">dbo.event12_5</span>
<svg style="left:82px;top:577px" width="9" height="9" viewBox="0 0 9 9"><rect x="0.5" y="0.5" width="8" height="8" fill="#fbfbfb" stroke="#9a9a9a" stroke-width="1"/><path d="M2 4.5 H7" stroke="#111" stroke-width="1"/><path d="M4.5 2 V7" stroke="#111" stroke-width="1"/></svg><svg style="left:99px;top:574px" width="12" height="11" viewBox="0 0 12 11"><rect x="0" y="0" width="12" height="11" fill="#8c9dc2"/><rect x="1" y="3" width="10" height="7" fill="url(#tg)"/><rect x="11" y="3" width="1" height="8" fill="#2f4673"/><rect x="0.6" y="10" width="11.4" height="1" fill="#2f4673"/><rect x="0" y="0" width="12" height="3" fill="#3f74e4"/><rect x="1" y="1" width="10" height="1" fill="#7aa2f0"/><path d="M2 4.5H5M6 4.5H9M2 6.5H5M6 6.5H9M2 8.5H5M6 8.5H9" stroke="#9dabc9" stroke-width="1"/></svg><span id="t32" class="t " style="left:117.80px;top:572.14px;font-size:12px;color:#15151a;font-family:'Liberation Sans',sans-serif;letter-spacing:-0.829px;">dbo.EXPLORE_AND_CORRELATE</span>
<svg style="left:82px;top:595px" width="9" height="9" viewBox="0 0 9 9"><rect x="0.5" y="0.5" width="8" height="8" fill="#fbfbfb" stroke="#9a9a9a" stroke-width="1"/><path d="M2 4.5 H7" stroke="#111" stroke-width="1"/><path d="M4.5 2 V7" stroke="#111" stroke-width="1"/></svg><svg style="left:99px;top:592px" width="12" height="11" viewBox="0 0 12 11"><rect x="0" y="0" width="12" height="11" fill="#8c9dc2"/><rect x="1" y="3" width="10" height="7" fill="url(#tg)"/><rect x="11" y="3" width="1" height="8" fill="#2f4673"/><rect x="0.6" y="10" width="11.4" height="1" fill="#2f4673"/><rect x="0" y="0" width="12" height="3" fill="#3f74e4"/><rect x="1" y="1" width="10" height="1" fill="#7aa2f0"/><path d="M2 4.5H5M6 4.5H9M2 6.5H5M6 6.5H9M2 8.5H5M6 8.5H9" stroke="#9dabc9" stroke-width="1"/></svg><span id="t33" class="t " style="left:117.80px;top:590.14px;font-size:12px;color:#15151a;font-family:'Liberation Sans',sans-serif;letter-spacing:-0.666px;">dbo.FWPASSWORDPOLICY</span>
<svg style="left:82px;top:613px" width="9" height="9" viewBox="0 0 9 9"><rect x="0.5" y="0.5" width="8" height="8" fill="#fbfbfb" stroke="#9a9a9a" stroke-width="1"/><path d="M2 4.5 H7" stroke="#111" stroke-width="1"/><path d="M4.5 2 V7" stroke="#111" stroke-width="1"/></svg><svg style="left:99px;top:610px" width="12" height="11" viewBox="0 0 12 11"><rect x="0" y="0" width="12" height="11" fill="#8c9dc2"/><rect x="1" y="3" width="10" height="7" fill="url(#tg)"/><rect x="11" y="3" width="1" height="8" fill="#2f4673"/><rect x="0.6" y="10" width="11.4" height="1" fill="#2f4673"/><rect x="0" y="0" width="12" height="3" fill="#3f74e4"/><rect x="1" y="1" width="10" height="1" fill="#7aa2f0"/><path d="M2 4.5H5M6 4.5H9M2 6.5H5M6 6.5H9M2 8.5H5M6 8.5H9" stroke="#9dabc9" stroke-width="1"/></svg><span id="t34" class="t " style="left:117.80px;top:608.14px;font-size:12px;color:#15151a;font-family:'Liberation Sans',sans-serif;letter-spacing:-0.681px;">dbo.FWPASSWORDPOLICY_LD</span>
</div></div>
<div class="a" style="left:489px;top:48px;width:17px;height:573px;background:#fff;box-sizing:border-box;border-left:1px solid #c9c9c9;border-right:1px solid #c9c9c9"></div>
<div class="a" style="left:489px;top:49px;width:17px;height:17px;background:#fff;box-sizing:border-box;border:1px solid #c3c3c3"></div>
<svg style="left:493px;top:55.5px" width="9" height="6"><path d="M0.7 5.2 L4.5 1.2 L8.3 5.2" stroke="#555" stroke-width="1.3" fill="none"/></svg>
<div class="a" style="left:489px;top:80px;width:17px;height:98px;background:#dcdcdc;box-sizing:border-box;border:1px solid #a6a6a6"></div>
<svg style="left:494px;top:124px" width="8" height="9"><path d="M0 1H8M0 4H8M0 7H8" stroke="#5a5a5a" stroke-width="1.4"/></svg>
<div class="a" style="left:507px;top:48px;width:1px;height:573px;background:rgba(47,65,99,.45);"></div>
<!-- lower strip -->
<div class="a" style="left:0px;top:621px;width:1911px;height:43px;background:#fff;"></div>
<div class="a" style="left:0;top:621px;width:498px;height:43px;overflow:hidden"><div class="a" style="left:0;top:-621px">
<svg style="left:72.7px;top:630px" width="9" height="9" viewBox="0 0 9 9"><rect x="0.5" y="0.5" width="8" height="8" fill="#fbfbfb" stroke="#9a9a9a" stroke-width="1"/><path d="M2 4.5 H7" stroke="#111" stroke-width="1"/><path d="M4.5 2 V7" stroke="#111" stroke-width="1"/></svg><svg style="left:89.7px;top:627px" width="12" height="11" viewBox="0 0 12 11"><rect x="0" y="0" width="12" height="11" fill="#8c9dc2"/><rect x="1" y="3" width="10" height="7" fill="url(#tg)"/><rect x="11" y="3" width="1" height="8" fill="#2f4673"/><rect x="0.6" y="10" width="11.4" height="1" fill="#2f4673"/><rect x="0" y="0" width="12" height="3" fill="#3f74e4"/><rect x="1" y="1" width="10" height="1" fill="#7aa2f0"/><path d="M2 4.5H5M6 4.5H9M2 6.5H5M6 6.5H9M2 8.5H5M6 8.5H9" stroke="#9dabc9" stroke-width="1"/></svg><span id="t35" class="t " style="left:108.50px;top:625.14px;font-size:12px;color:#15151a;font-family:'Liberation Sans',sans-serif;letter-spacing:-0.829px;">dbo.EXPLORE_AND_CORRELATE</span>
<svg style="left:72.7px;top:648px" width="9" height="9" viewBox="0 0 9 9"><rect x="0.5" y="0.5" width="8" height="8" fill="#fbfbfb" stroke="#9a9a9a" stroke-width="1"/><path d="M2 4.5 H7" stroke="#111" stroke-width="1"/><path d="M4.5 2 V7" stroke="#111" stroke-width="1"/></svg><svg style="left:89.7px;top:645px" width="12" height="11" viewBox="0 0 12 11"><rect x="0" y="0" width="12" height="11" fill="#8c9dc2"/><rect x="1" y="3" width="10" height="7" fill="url(#tg)"/><rect x="11" y="3" width="1" height="8" fill="#2f4673"/><rect x="0.6" y="10" width="11.4" height="1" fill="#2f4673"/><rect x="0" y="0" width="12" height="3" fill="#3f74e4"/><rect x="1" y="1" width="10" height="1" fill="#7aa2f0"/><path d="M2 4.5H5M6 4.5H9M2 6.5H5M6 6.5H9M2 8.5H5M6 8.5H9" stroke="#9dabc9" stroke-width="1"/></svg><span id="t36" class="t " style="left:108.50px;top:643.14px;font-size:12px;color:#15151a;font-family:'Liberation Sans',sans-serif;letter-spacing:-0.666px;">dbo.FWPASSWORDPOLICY</span>
<svg style="left:72.7px;top:666px" width="9" height="9" viewBox="0 0 9 9"><rect x="0.5" y="0.5" width="8" height="8" fill="#fbfbfb" stroke="#9a9a9a" stroke-width="1"/><path d="M2 4.5 H7" stroke="#111" stroke-width="1"/><path d="M4.5 2 V7" stroke="#111" stroke-width="1"/></svg><svg style="left:89.7px;top:663px" width="12" height="11" viewBox="0 0 12 11"><rect x="0" y="0" width="12" height="11" fill="#8c9dc2"/><rect x="1" y="3" width="10" height="7" fill="url(#tg)"/><rect x="11" y="3" width="1" height="8" fill="#2f4673"/><rect x="0.6" y="10" width="11.4" height="1" fill="#2f4673"/><rect x="0" y="0" width="12" height="3" fill="#3f74e4"/><rect x="1" y="1" width="10" height="1" fill="#7aa2f0"/><path d="M2 4.5H5M6 4.5H9M2 6.5H5M6 6.5H9M2 8.5H5M6 8.5H9" stroke="#9dabc9" stroke-width="1"/></svg><span id="t37" class="t " style="left:108.50px;top:661.14px;font-size:12px;color:#15151a;font-family:'Liberation Sans',sans-serif;letter-spacing:-0.681px;">dbo.FWPASSWORDPOLICY_LD</span>
</div></div>
<div class="a" style="left:480px;top:621px;width:1px;height:43px;background:#c9c9c9;"></div>
<div class="a" style="left:496px;top:621px;width:1px;height:43px;background:#c9c9c9;"></div>
<div class="a" style="left:498px;top:621px;width:7px;height:43px;background:#2f4163;"></div>
<div class="a" style="left:505px;top:621px;width:1px;height:43px;background:rgba(47,65,99,.45);"></div>
<div class="a" style="left:509px;top:621px;width:1px;height:43px;background:#a8a8ae;"></div>
<div class="a" style="left:1327px;top:621px;width:584px;height:43px;background:#000;"></div>
<!-- document tabs -->
<div class="a" style="left:514px;top:2px;width:243px;height:21px;background:linear-gradient(#fffdf8 0,#fff6dc 52%,#ffe8a6 52%);border-radius:3px 3px 0 0"></div>
<div class="a" style="left:514px;top:22px;width:1391px;height:4px;background:#ffe8a6;border-top-right-radius:2px"></div>
<span id="t38" class="t " style="left:517.70px;top:4.94px;font-size:12px;color:#000;font-family:'Liberation Sans',sans-serif;letter-spacing:-0.249px;">SQLQuery2.sql - lo.</span>
<svg style="left:744px;top:9px" width="8" height="8"><path d="M0.3 0.3L7.6 7.7M7.6 0.3L0.3 7.7" stroke="#75633d" stroke-width="1.5"/></svg>
<div class="a" style="left:619px;top:0px;width:130px;height:23px;background:#000;"></div>
<span id="t39" class="t " style="left:762.30px;top:4.84px;font-size:12px;color:#fff;font-family:'Liberation Sans',sans-serif;letter-spacing:-0.282px;">SQLQuery1.sql - lo...</span>
<div class="a" style="left:868px;top:3px;width:118px;height:20px;background:#000;"></div>
<svg style="left:1890px;top:11px" width="9" height="5"><path d="M0.3 0.4H8.3L4.3 4.6Z" fill="#ced5e1"/></svg>
<!-- editor -->
<div class="a" style="left:514px;top:26px;width:1391px;height:386px;background:#fff;"></div>
<div class="a" style="left:514px;top:26px;width:17px;height:386px;background:#f0f0f0;"></div>
<div class="a" style="left:552px;top:27px;width:1px;height:15px;background:#000;"></div>
<svg style="left:541px;top:46px" width="10" height="301" viewBox="0 0 10 301"><path d="M5.5 9 V299.5 H9.5" stroke="#a5a5a5" stroke-width="1" fill="none"/><rect x="0.5" y="0.5" width="8" height="8" fill="#fff" stroke="#a5a5a5"/><path d="M2 4.5H7" stroke="#555" stroke-width="1"/></svg>
<div class="a" id="code" style="left:552.4px;top:27.4px;font-family:'Liberation Mono',monospace;font-size:12px;line-height:16px;letter-spacing:-0.2px;white-space:pre"><div style="height:16px"><span style="color:#008000">/****** Script for SelectTopNRows command from SSMS  ******/</span></div><div style="height:16px"><span style="color:#0000ff">SELECT TOP </span><span style="color:#000">1000 [UNIQUE_NAME]</span></div><div style="height:16px"><span style="color:#808080">      ,</span><span style="color:#000">[ENV_OID]</span></div><div style="height:16px"><span style="color:#808080">      ,</span><span style="color:#000">[CONNECTION_NAME]</span></div><div style="height:16px"><span style="color:#808080">      ,</span><span style="color:#000">[CONNECTION_TYPE]</span></div><div style="height:16px"><span style="color:#808080">      ,</span><span style="color:#000">[CONNECTION_DESCRIPTION]</span></div><div style="height:16px"><span style="color:#808080">      ,</span><span style="color:#000">[DEFAULT_CONNECTION]</span></div><div style="height:16px"><span style="color:#808080">      ,</span><span style="color:#000">[PROTOCOL]</span></div><div style="height:16px"><span style="color:#808080">      ,</span><span style="color:#000">[HOSTNAME]</span></div><div style="height:16px"><span style="color:#808080">      ,</span><span style="color:#000">[PORT]</span></div><div style="height:16px"><span style="color:#808080">      ,</span><span style="color:#000">[USER_ID]</span></div><div style="height:16px"><span style="color:#808080">      ,</span><span style="color:#000">[PASSWORD]</span></div><div style="height:16px"><span style="color:#808080">      ,</span><span style="color:#000">[JDBC_DRIVER_CLASS]</span></div><div style="height:16px"><span style="color:#808080">      ,</span><span style="color:#000">[JDBC_SELECT_METHOD]</span></div><div style="height:16px"><span style="color:#808080">      ,</span><span style="color:#000">[JDBC_DATABASE_TYPE]</span></div><div style="height:16px"><span style="color:#808080">      ,</span><span style="color:#000">[LDAP_SECURE_CONNECTION_FLAG]</span></div><div style="height:16px"><span style="color:#808080">      ,</span><span style="color:#000">[LDAP_SEARCH_ROOT]</span></div><div style="height:16px"><span style="color:#808080">      ,</span><span style="color:#000">[LDAP_CLEAR_TEXT_PASSWORD]</span></div><div style="height:16px"><span style="color:#808080">      ,</span><span style="color:#000">[JDBC_ODBC_DATABASE_NAME]</span></div><div style="height:16px"><span style="color:#0000ff">  FROM </span><span style="color:#000">[imdb]</span><span style="color:#808080">.</span><span style="color:#000">[dbo]</span><span style="color:#808080">.</span><span style="color:#000">[CONNECTION]</span></div></div>
<div class="a" style="left:1888px;top:26px;width:17px;height:386px;background:#fff;box-sizing:border-box;border-left:1px solid #c9c9c9"></div>
<div class="a" style="left:1889px;top:26px;width:16px;height:17px;background:#e3e8f1;box-sizing:border-box;border:1px solid #b4bccb"></div>
<svg style="left:1890px;top:27px" width="14" height="15" viewBox="0 0 14 15"><path d="M1.5 6.2H12.5M1.5 8.6H12.5" stroke="#000" stroke-width="1"/><path d="M7 1.5V5.6M7 9.2V13.5" stroke="#000" stroke-width="1.2"/><path d="M4.6 3.8L7 0.8L9.4 3.8ZM4.6 11.2L7 14.2L9.4 11.2Z" fill="#000"/></svg>
<div class="a" style="left:1889px;top:43px;width:16px;height:17px;background:#fff;box-sizing:border-box;border:1px solid #d0d0d0"></div>
<svg style="left:1892.5px;top:49px" width="9" height="6"><path d="M0.7 5.2 L4.5 1.2 L8.3 5.2" stroke="#666" stroke-width="1.3" fill="none"/></svg>
<div class="a" style="left:1889px;top:60px;width:16px;height:186px;background:#dcdcdc;box-sizing:border-box;border:1px solid #a6a6a6"></div>
<svg style="left:1893px;top:149px" width="8" height="9"><path d="M0 1H8M0 4H8M0 7H8" stroke="#5a5a5a" stroke-width="1.4"/></svg>
<div class="a" style="left:1889px;top:395px;width:16px;height:17px;background:#fff;box-sizing:border-box;border:1px solid #c3c3c3"></div>
<svg style="left:1892.5px;top:401px" width="9" height="6"><path d="M0.7 0.8 L4.5 4.8 L8.3 0.8" stroke="#666" stroke-width="1.3" fill="none"/></svg>
<div class="a" style="left:514px;top:412px;width:1391px;height:16px;background:#fff;"></div>
<div class="a" style="left:514px;top:412px;width:60px;height:17px;background:#fafafa;"></div>
<span id="t40" class="t " style="left:517.60px;top:412.19px;font-size:11px;color:#000;font-family:'Liberation Sans',sans-serif;letter-spacing:-0.001px;">100 %</span>
<svg style="left:564px;top:418px" width="8" height="5"><path d="M0.3 0.4H7.3L3.8 4.2Z" fill="#222"/></svg>
<div class="a" style="left:574px;top:412px;width:1314px;height:17px;background:#fff;box-sizing:border-box;border:1px solid #c3c3c3"></div>
<div class="a" style="left:574px;top:412px;width:17px;height:17px;background:#fff;box-sizing:border-box;border:1px solid #c3c3c3"></div>
<div class="a" style="left:1871px;top:412px;width:17px;height:17px;background:#fff;box-sizing:border-box;border:1px solid #c3c3c3"></div>
<svg style="left:579px;top:416px" width="6" height="9"><path d="M5 0.7 L1.2 4.5 L5 8.3" stroke="#555" stroke-width="1.3" fill="none"/></svg>
<svg style="left:1877px;top:416px" width="6" height="9"><path d="M1 0.7 L4.8 4.5 L1 8.3" stroke="#555" stroke-width="1.3" fill="none"/></svg>
<!-- results -->
<div class="a" style="left:514px;top:429px;width:1391px;height:26px;background:#f0f0f0;"></div>
<div class="a" style="left:514px;top:455px;width:1391px;height:166px;background:#fff;"></div>
<div class="a" style="left:587px;top:454px;width:1318px;height:1px;background:#8e93a0;"></div>
<div class="a" style="left:587px;top:435px;width:80px;height:20px;background:#f0f0f0;box-sizing:border-box;border:1px solid #8e93a0;border-left:none"></div>
<div class="a" style="left:514px;top:433px;width:73px;height:23px;background:#fff;box-sizing:border-box;border:1px solid #8e93a0;border-bottom:none"></div>
<svg style="left:523px;top:437px" width="14" height="13" viewBox="0 0 14 13"><rect x="0" y="0" width="14" height="13" fill="#9a9ca4"/><rect x="0" y="0" width="14" height="3" fill="#4674de"/><rect x="1" y="1" width="5" height="1" fill="#9dbcf5"/><rect x="6" y="1" width="7" height="1" fill="#6f97ec"/><rect x="1" y="3" width="3.4" height="2.4" fill="#fff"/><rect x="5.2" y="3" width="3.4" height="2.4" fill="#fff"/><rect x="9.4" y="3" width="3.6" height="2.4" fill="#eaf2fd"/><rect x="1" y="6.2" width="3.4" height="2.4" fill="#fff"/><rect x="5.2" y="6.2" width="3.4" height="2.4" fill="#fff"/><rect x="9.4" y="6.2" width="3.6" height="2.4" fill="#d3e4fb"/><rect x="1" y="9.4" width="3.4" height="2.6" fill="#fff"/><rect x="5.2" y="9.4" width="3.4" height="2.6" fill="#eef4fd"/><rect x="9.4" y="9.4" width="3.6" height="2.6" fill="#bcd5f8"/><rect x="13" y="2" width="1" height="11" fill="#2d3566"/><rect x="0.5" y="12" width="13.5" height="1" fill="#33343f"/></svg>
<span id="t41" class="t " style="left:544.30px;top:435.54px;font-size:12px;color:#000;font-family:'Liberation Sans',sans-serif;transform:scaleX(0.8922);">Results</span>
<svg style="left:592px;top:437px" width="14" height="16" viewBox="0 0 14 16"><rect x="0.5" y="0.5" width="7" height="14" fill="#e9edf6" stroke="#8a8fb4" stroke-width="0.9"/><rect x="1.2" y="1" width="5.8" height="2.6" fill="#cfdcf2"/><path d="M1.4 4.4H6.8M1.4 6.4H6.8" stroke="#9aa3c0" stroke-width="0.9"/><rect x="1" y="8" width="6" height="5.6" fill="#d6e6f6"/><rect x="4.6" y="11.2" width="1.6" height="1.6" fill="#3bb02c"/><path d="M6.6 5.6 H11.2 L13.6 8 V15.5 H6.6Z" fill="#fbfbff" stroke="#2c2c72" stroke-width="0.9"/><path d="M11.2 5.6 V8 H13.6" stroke="#2c2c72" stroke-width="0.8" fill="#c9d4ee"/><path d="M7.8 8.5H10M7.8 10.5H10M7.8 12.5H10M7.8 14.2H10" stroke="#f04a1c" stroke-width="1"/><path d="M11 10.5H12.2M11 12.5H12.2M11 14.2H12.2" stroke="#2f8f2f" stroke-width="1"/></svg>
<span id="t42" class="t " style="left:613.30px;top:437.74px;font-size:12px;color:#000;font-family:'Liberation Sans',sans-serif;transform:scaleX(0.8921);">Messages</span>
<div class="a" style="left:518px;top:456px;width:1383px;height:165px;background:#fff;box-sizing:border-box;border:1px solid #9da2ad;border-bottom:none"></div>
<div class="a" style="left:519px;top:457px;width:1381px;height:17px;background:linear-gradient(#ffffff,#f7f7f7 60%,#efefef);"></div>
<div class="a" style="left:519px;top:474px;width:1381px;height:1px;background:#e3e3e3;"></div>
<div class="a" style="left:519px;top:475px;width:32px;height:57px;background:#fbfbfb;"></div>
<div class="a" style="left:519px;top:494px;width:1381px;height:1px;background:#e3e3e3;"></div>
<div class="a" style="left:519px;top:513px;width:1381px;height:1px;background:#e3e3e3;"></div>
<div class="a" style="left:519px;top:532px;width:1381px;height:1px;background:#e3e3e3;"></div>
<div class="a" style="left:1032.5px;top:475px;width:616px;height:19px;background:#ffffe1;"></div>
<div class="a" style="left:551px;top:475px;width:97px;height:19px;background:#e9edf1;"></div>
<div class="a" style="left:551px;top:457px;width:1px;height:76px;background:#d8d8d8;"></div>
<div class="a" style="left:552px;top:458px;width:1px;height:15px;background:#fff;"></div>
<div class="a" style="left:648px;top:457px;width:1px;height:76px;background:#dedede;"></div>
<div class="a" style="left:649px;top:458px;width:1px;height:15px;background:#fff;"></div>
<div class="a" style="left:710px;top:457px;width:1px;height:76px;background:#dedede;"></div>
<div class="a" style="left:711px;top:458px;width:1px;height:15px;background:#fff;"></div>
<div class="a" style="left:908px;top:457px;width:1px;height:76px;background:#dedede;"></div>
<div class="a" style="left:909px;top:458px;width:1px;height:15px;background:#fff;"></div>
<div class="a" style="left:1032px;top:457px;width:1px;height:76px;background:#dedede;"></div>
<div class="a" style="left:1033px;top:458px;width:1px;height:15px;background:#fff;"></div>
<div class="a" style="left:1206px;top:457px;width:1px;height:76px;background:#dedede;"></div>
<div class="a" style="left:1207px;top:458px;width:1px;height:15px;background:#fff;"></div>
<div class="a" style="left:1352px;top:457px;width:1px;height:76px;background:#dedede;"></div>
<div class="a" style="left:1353px;top:458px;width:1px;height:15px;background:#fff;"></div>
<div class="a" style="left:1430px;top:457px;width:1px;height:76px;background:#dedede;"></div>
<div class="a" style="left:1431px;top:458px;width:1px;height:15px;background:#fff;"></div>
<div class="a" style="left:1604px;top:457px;width:1px;height:76px;background:#dedede;"></div>
<div class="a" style="left:1605px;top:458px;width:1px;height:15px;background:#fff;"></div>
<div class="a" style="left:1648px;top:457px;width:1px;height:76px;background:#dedede;"></div>
<div class="a" style="left:1649px;top:458px;width:1px;height:15px;background:#fff;"></div>
<div class="a" style="left:1710px;top:457px;width:1px;height:76px;background:#dedede;"></div>
<div class="a" style="left:1711px;top:458px;width:1px;height:15px;background:#fff;"></div>
<div class="a" style="left:551px;top:475px;width:98px;height:20px;background:transparent;box-sizing:border-box;border:1px dotted #000"></div>
<span id="t43" class="t " style="left:555.60px;top:457.64px;font-size:12px;color:#000;font-family:'Liberation Sans',sans-serif;transform:scaleX(0.9101);">UNIQUE_NAME</span>
<span id="t44" class="t " style="left:652.40px;top:457.64px;font-size:12px;color:#000;font-family:'Liberation Sans',sans-serif;transform:scaleX(0.9015);">ENV_OID</span>
<span id="t45" class="t " style="left:714.80px;top:457.64px;font-size:12px;color:#000;font-family:'Liberation Sans',sans-serif;transform:scaleX(0.8958);">CONNECTION_NAME</span>
<span id="t46" class="t " style="left:911.30px;top:457.64px;font-size:12px;color:#000;font-family:'Liberation Sans',sans-serif;transform:scaleX(0.9041);">CONNECTION_TYPE</span>
<span id="t47" class="t " style="left:1036.60px;top:457.64px;font-size:12px;color:#000;font-family:'Liberation Sans',sans-serif;transform:scaleX(0.8951);">CONNECTION_DESCRIPTION</span>
<span id="t48" class="t " style="left:1210.60px;top:457.64px;font-size:12px;color:#000;font-family:'Liberation Sans',sans-serif;transform:scaleX(0.8984);">DEFAULT_CONNECTION</span>
<span id="t49" class="t " style="left:1357.70px;top:457.64px;font-size:12px;color:#000;font-family:'Liberation Sans',sans-serif;transform:scaleX(0.8849);">PROTOCOL</span>
<span id="t50" class="t " style="left:1434.30px;top:457.64px;font-size:12px;color:#000;font-family:'Liberation Sans',sans-serif;transform:scaleX(0.9130);">HOSTNAME</span>
<span id="t51" class="t " style="left:1608.20px;top:457.64px;font-size:12px;color:#000;font-family:'Liberation Sans',sans-serif;transform:scaleX(0.9358);">PORT</span>
<span id="t52" class="t " style="left:1653.50px;top:457.64px;font-size:12px;color:#000;font-family:'Liberation Sans',sans-serif;transform:scaleX(0.9170);">USER_ID</span>
<span id="t53" class="t " style="left:1715.00px;top:457.64px;font-size:12px;color:#000;font-family:'Liberation Sans',sans-serif;transform:scaleX(0.9288);">PASSWORD</span>
<div class="a" style="left:519px;top:457px;width:1381px;height:164px;overflow:hidden"><div class="a" style="left:-519px;top:-457px">
<span id="t54" class="t " style="left:525.20px;top:476.94px;font-size:12px;color:#000;font-family:'Liberation Sans',sans-serif;transform:scaleX(0.8374);">1</span>
<span id="t55" class="t " style="left:558.20px;top:476.94px;font-size:12px;color:#000;font-family:'Liberation Sans',sans-serif;transform:scaleX(0.8374);">1</span>
<span id="t56" class="t " style="left:655.20px;top:476.94px;font-size:12px;color:#000;font-family:'Liberation Sans',sans-serif;transform:scaleX(0.8374);">1</span>
<span id="t57" class="t " style="left:717.50px;top:476.94px;font-size:12px;color:#000;font-family:'Liberation Sans',sans-serif;transform:scaleX(0.8905);">BUS_OBJ_RPT_SVR_CONNECTION</span>
<span id="t58" class="t " style="left:914.10px;top:476.94px;font-size:12px;color:#000;font-family:'Liberation Sans',sans-serif;transform:scaleX(0.9009);">ReportServer</span>
<span id="t59" class="t " style="left:1039.20px;top:476.94px;font-size:12px;color:#000;font-family:'Liberation Sans',sans-serif;transform:scaleX(0.9580);">NULL</span>
<span id="t60" class="t " style="left:1212.40px;top:476.94px;font-size:12px;color:#000;font-family:'Liberation Sans',sans-serif;transform:scaleX(0.9418);">NULL</span>
<span id="t61" class="t " style="left:1359.20px;top:476.94px;font-size:12px;color:#000;font-family:'Liberation Sans',sans-serif;transform:scaleX(0.9515);">NULL</span>
<span id="t62" class="t " style="left:1436.40px;top:476.94px;font-size:12px;color:#000;font-family:'Liberation Sans',sans-serif;transform:scaleX(0.9580);">NULL</span>
<span id="t63" class="t " style="left:1610.40px;top:476.94px;font-size:12px;color:#000;font-family:'Liberation Sans',sans-serif;transform:scaleX(0.9385);">NULL</span>
<span id="t64" class="t " style="left:1654.80px;top:476.94px;font-size:12px;color:#000;font-family:'Liberation Sans',sans-serif;transform:scaleX(0.8746);">imuser</span>
<span id="t65" class="t " style="left:1716.80px;top:476.94px;font-size:12px;color:#000;font-family:'Liberation Sans',sans-serif;transform:scaleX(0.9138);">{RC2}:E1ltdd4PQHJEYM/u0Q40hw==</span>
<span id="t66" class="t " style="left:524.40px;top:495.94px;font-size:12px;color:#000;font-family:'Liberation Sans',sans-serif;transform:scaleX(1.0467);">2</span>
<span id="t67" class="t " style="left:557.60px;top:495.94px;font-size:12px;color:#000;font-family:'Liberation Sans',sans-serif;transform:scaleX(1.0467);">2</span>
<span id="t68" class="t " style="left:655.20px;top:495.94px;font-size:12px;color:#000;font-family:'Liberation Sans',sans-serif;transform:scaleX(0.8374);">1</span>
<span id="t69" class="t " style="left:716.90px;top:495.94px;font-size:12px;color:#000;font-family:'Liberation Sans',sans-serif;transform:scaleX(0.9004);">Audit data source</span>
<span id="t70" class="t " style="left:914.10px;top:495.94px;font-size:12px;color:#000;font-family:'Liberation Sans',sans-serif;transform:scaleX(0.9066);">audit</span>
<span id="t71" class="t " style="left:1039.20px;top:495.94px;font-size:12px;color:#000;font-family:'Liberation Sans',sans-serif;transform:scaleX(0.8877);">Derived From Audit data source</span>
<span id="t72" class="t " style="left:1211.20px;top:495.94px;font-size:12px;color:#000;font-family:'Liberation Sans',sans-serif;transform:scaleX(0.9306);">false</span>
<span id="t73" class="t " style="left:1359.00px;top:495.94px;font-size:12px;color:#000;font-family:'Liberation Sans',sans-serif;transform:scaleX(0.9029);">JDBC</span>
<span id="t74" class="t " style="left:1610.40px;top:495.94px;font-size:12px;color:#000;font-family:'Liberation Sans',sans-serif;transform:scaleX(0.9325);">1433</span>
<span id="t75" class="t " style="left:1654.80px;top:495.94px;font-size:12px;color:#000;font-family:'Liberation Sans',sans-serif;transform:scaleX(0.8746);">imuser</span>
<span id="t76" class="t " style="left:1716.80px;top:495.94px;font-size:12px;color:#000;font-family:'Liberation Sans',sans-serif;transform:scaleX(0.9138);">{RC2}:E1ltdd4PQHJEYM/u0Q40hw==</span>
<span id="t77" class="t " style="left:524.40px;top:514.94px;font-size:12px;color:#000;font-family:'Liberation Sans',sans-serif;transform:scaleX(1.0467);">3</span>
<span id="t78" class="t " style="left:557.60px;top:514.94px;font-size:12px;color:#000;font-family:'Liberation Sans',sans-serif;transform:scaleX(1.0467);">3</span>
<span id="t79" class="t " style="left:655.20px;top:514.94px;font-size:12px;color:#000;font-family:'Liberation Sans',sans-serif;transform:scaleX(0.8374);">1</span>
<span id="t80" class="t " style="left:716.90px;top:514.94px;font-size:12px;color:#000;font-family:'Liberation Sans',sans-serif;transform:scaleX(0.8700);">rptParamConn</span>
<span id="t81" class="t " style="left:914.10px;top:514.94px;font-size:12px;color:#000;font-family:'Liberation Sans',sans-serif;transform:scaleX(0.8971);">Snapshot</span>
<span id="t82" class="t " style="left:1039.20px;top:514.94px;font-size:12px;color:#000;font-family:'Liberation Sans',sans-serif;transform:scaleX(0.8672);">Derived From rptParamConn</span>
<span id="t83" class="t " style="left:1211.20px;top:514.94px;font-size:12px;color:#000;font-family:'Liberation Sans',sans-serif;transform:scaleX(0.9306);">false</span>
<span id="t84" class="t " style="left:1359.00px;top:514.94px;font-size:12px;color:#000;font-family:'Liberation Sans',sans-serif;transform:scaleX(0.9029);">JDBC</span>
<span id="t85" class="t " style="left:1610.40px;top:514.94px;font-size:12px;color:#000;font-family:'Liberation Sans',sans-serif;transform:scaleX(0.9325);">1433</span>
<span id="t86" class="t " style="left:1654.80px;top:514.94px;font-size:12px;color:#000;font-family:'Liberation Sans',sans-serif;transform:scaleX(0.8746);">imuser</span>
<span id="t87" class="t " style="left:1716.80px;top:514.94px;font-size:12px;color:#000;font-family:'Liberation Sans',sans-serif;transform:scaleX(0.9138);">{RC2}:E1ltdd4PQHJEYM/u0Q40hw==</span>
</div></div>
<div class="a" style="left:1430px;top:496px;width:173px;height:42.6px;background:#000;"></div>
<div class="a" style="left:514px;top:26px;width:1px;height:595px;background:rgba(47,65,99,.4);"></div>
</body></html>
